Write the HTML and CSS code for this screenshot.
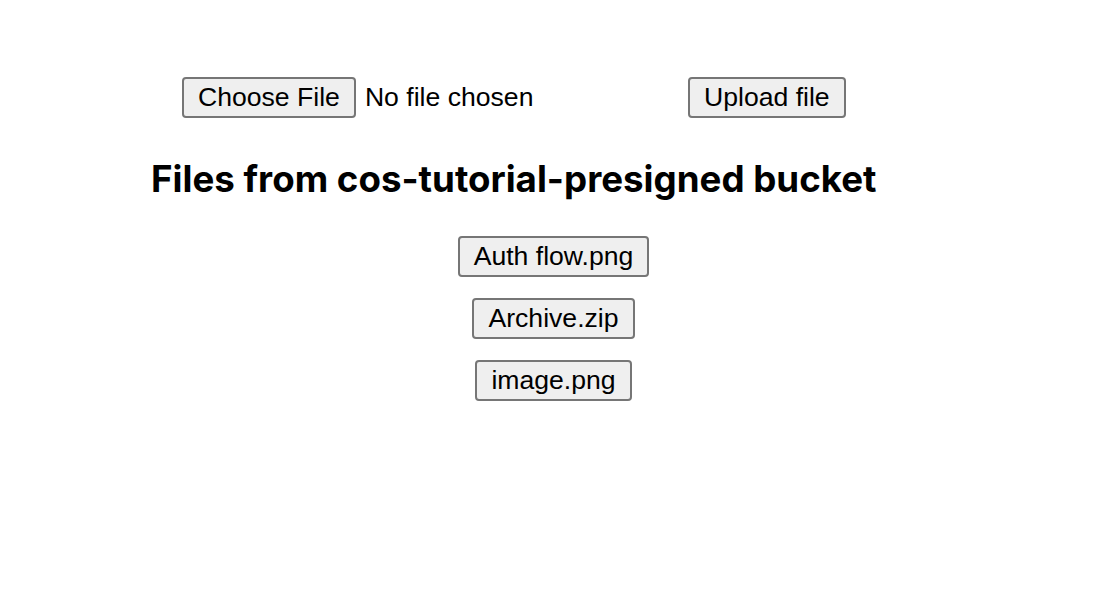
FILE: index.html
```html
<!DOCTYPE html>
<html lang="en">
<head>
<meta charset="utf-8">
<title>Files</title>
<link rel="stylesheet" href="styles.css">
</head>
<body>
<main class="page">
  <section class="upload">
    <form class="upload-row">
      <div class="file-input">
        <button type="button" class="btn">Choose File</button>
        <span class="file-name">No file chosen</span>
      </div>
      <button type="button" class="btn">Upload file</button>
    </form>
    <h1 class="title">Files from cos-tutorial-presigned bucket</h1>
  </section>
  <ul class="file-list">
    <li><button type="button" class="btn">Auth flow.png</button></li>
    <li><button type="button" class="btn">Archive.zip</button></li>
    <li><button type="button" class="btn">image.png</button></li>
  </ul>
</main>
</body>
</html>
```

FILE: styles.css
```css
html, body {
  margin: 0;
  padding: 0;
  background: #ffffff;
}

.page {
  font-family: "Liberation Sans", Arial, sans-serif;
  color: #000;
  padding-top: 77px;
}

.upload {
  padding-left: 151px;
}

.upload-row {
  display: flex;
  align-items: center;
  margin: 0 0 0 31px;
}

.file-input {
  display: flex;
  align-items: center;
  width: 506px;
}

.file-name {
  font-size: 26.6px;
  margin-left: 9px;
}

.btn {
  font-family: "Liberation Sans", Arial, sans-serif;
  font-size: 26.6px;
  line-height: 27px;
  color: #000;
  background: #efefef;
  border: 2px solid #767676;
  border-radius: 4px;
  padding: 5px 14px;
  margin: 0;
}

.title {
  font-family: Inter, "Liberation Sans", sans-serif;
  font-weight: 700;
  font-size: 36.7px;
  margin: 39px 0 0 0;
  line-height: 44px;
}

.file-list {
  list-style: none;
  margin: 35px 0 0 0;
  padding: 0 5px 0 0;
  display: flex;
  flex-direction: column;
  align-items: center;
  gap: 21px;
}
```
